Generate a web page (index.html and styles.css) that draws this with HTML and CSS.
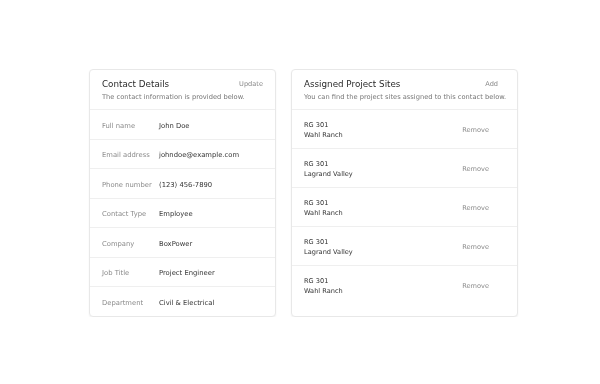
FILE: index.html
```html
<!DOCTYPE html>
<html lang="en">
<head>
    <meta charset="UTF-8">
    <meta name="viewport" content="width=device-width, initial-scale=1.0">
    <title>Contact</title>
    <link rel="stylesheet" href="styles.css">
</head>
<body>
    <div class="page">
        <div class="card">
            <div class="card-header">
                <div class="header-top">
                    <h2>Contact Details</h2>
                    <a class="action" href="#">Update</a>
                </div>
                <p>The contact information is provided below.</p>
            </div>
            <dl class="details">
                <div class="detail-row"><dt>Full name</dt><dd>John Doe</dd></div>
                <div class="detail-row"><dt>Email address</dt><dd>johndoe@example.com</dd></div>
                <div class="detail-row"><dt>Phone number</dt><dd>(123) 456-7890</dd></div>
                <div class="detail-row"><dt>Contact Type</dt><dd>Employee</dd></div>
                <div class="detail-row"><dt>Company</dt><dd>BoxPower</dd></div>
                <div class="detail-row"><dt>Job Title</dt><dd>Project Engineer</dd></div>
                <div class="detail-row"><dt>Department</dt><dd>Civil &amp; Electrical</dd></div>
            </dl>
        </div>

        <div class="card">
            <div class="card-header">
                <div class="header-top sites-top">
                    <h2>Assigned Project Sites</h2>
                    <a class="action" href="#">Add</a>
                </div>
                <p>You can find the project sites assigned to this contact below.</p>
            </div>
            <ul class="sites">
                <li class="site-row">
                    <div class="site-name"><span>RG 301</span><span>Wahl Ranch</span></div>
                    <a class="remove" href="#">Remove</a>
                </li>
                <li class="site-row">
                    <div class="site-name"><span>RG 301</span><span>Lagrand Valley</span></div>
                    <a class="remove" href="#">Remove</a>
                </li>
                <li class="site-row">
                    <div class="site-name"><span>RG 301</span><span>Wahl Ranch</span></div>
                    <a class="remove" href="#">Remove</a>
                </li>
                <li class="site-row">
                    <div class="site-name"><span>RG 301</span><span>Lagrand Valley</span></div>
                    <a class="remove" href="#">Remove</a>
                </li>
                <li class="site-row">
                    <div class="site-name"><span>RG 301</span><span>Wahl Ranch</span></div>
                    <a class="remove" href="#">Remove</a>
                </li>
            </ul>
        </div>
    </div>
</body>
</html>
```

FILE: styles.css
```css
* {
    margin: 0;
    padding: 0;
    box-sizing: border-box;
}

body {
    font-family: "DejaVu Sans", sans-serif;
    background-color: #fff;
    color: #333;
}

.page {
    display: grid;
    grid-template-columns: 187px 227px;
    column-gap: 15px;
    padding: 69px 0 0 89px;
    will-change: transform;
}

.card {
    background-color: #fff;
    border: 1px solid #e8e8e8;
    border-radius: 4px;
    box-shadow: 0 1px 2px rgba(0, 0, 0, 0.05);
    overflow: hidden;
}

.card-header {
    padding: 8px 12px 7px;
    border-bottom: 1px solid #efefef;
}

.header-top {
    display: flex;
    justify-content: space-between;
    align-items: center;
}

.sites-top {
    padding-right: 7px;
}

.card-header h2 {
    font-size: 8.75px;
    font-weight: normal;
    line-height: 12px;
    color: #2b2b2b;
}

.card-header p {
    margin-top: 2px;
    font-size: 6.7px;
    line-height: 10px;
    color: #777;
    white-space: nowrap;
}

.action {
    font-size: 6.6px;
    line-height: 12px;
    color: #8a8a8a;
    text-decoration: none;
}

.details {
    display: flex;
    flex-direction: column;
}

.detail-row {
    display: flex;
    padding: 11.8px 12px 7.5px;
    border-top: 1px solid #efefef;
    font-size: 6.8px;
    line-height: 9.2px;
}

.detail-row:first-child {
    border-top: none;
}

.detail-row dt {
    width: 57px;
    flex-shrink: 0;
    color: #8a8a8a;
}

.detail-row dd {
    color: #333;
}

.sites {
    list-style: none;
}

.site-row {
    display: flex;
    justify-content: space-between;
    align-items: center;
    padding: 9.5px 28px 8.5px 12px;
    border-top: 1px solid #efefef;
    font-size: 6.6px;
    line-height: 10px;
}

.site-row:first-child {
    border-top: none;
}

.site-name {
    display: flex;
    flex-direction: column;
    color: #333;
}

.remove {
    color: #8a8a8a;
    text-decoration: none;
}
```
